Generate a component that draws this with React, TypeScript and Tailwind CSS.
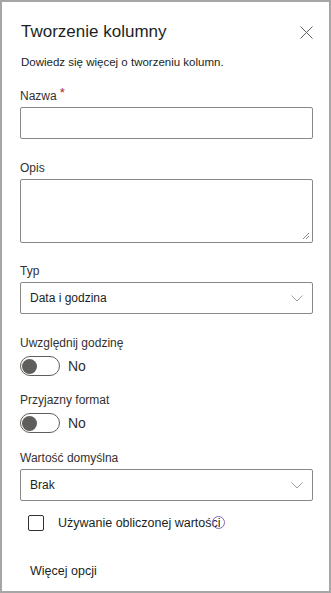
import { ReactNode } from "react";

const font = { fontFamily: '"Liberation Sans", Arial, sans-serif' };

function Label({ children, required }: { children: ReactNode; required?: boolean }) {
  return (
    <div className="h-5 leading-5 text-[12px] text-[#323130] mb-[1px]">
      {children}
      {required && <span className="text-[#a4262c] text-[13px] ml-[3px] relative -top-[3px]">*</span>}
    </div>
  );
}

function Chevron() {
  return (
    <svg width="12" height="7" viewBox="0 0 12 7" className="shrink-0">
      <path d="M0.5 0.5 L6 6 L11.5 0.5" fill="none" stroke="#a19f9d" strokeWidth="1" />
    </svg>
  );
}

function Select({ value }: { value: string }) {
  return (
    <div className="h-8 border border-[#8a8886] rounded-[2px] flex items-center justify-between pl-[9px] pr-[9px]">
      <span className="text-[12px] leading-5 text-[#201f1e]">{value}</span>
      <Chevron />
    </div>
  );
}

function Toggle() {
  return (
    <div className="flex items-center gap-2 mt-[3px] h-5">
      <div className="w-10 h-5 border border-[#605e5c] rounded-full flex items-center pl-[1px]">
        <div className="w-[15px] h-[15px] rounded-full bg-[#605e5c]" />
      </div>
      <span className="text-[14px] leading-5 text-[#323130]">No</span>
    </div>
  );
}

export default function App() {
  return (
    <div
      className="w-[331px] h-[593px] border-2 border-[#a6a6a6] bg-white flex flex-col pl-[18px] pr-[16px] pt-4"
      style={font}
    >
      {/* Header */}
      <div className="flex items-center justify-between h-7">
        <h1 className="text-[17px] text-[#201f1e] leading-7 pl-[1px]">Tworzenie kolumny</h1>
        <svg width="13" height="13" viewBox="0 0 13 13">
          <path d="M0.5 0.5 L12.5 12.5 M12.5 0.5 L0.5 12.5" stroke="#605e5c" strokeWidth="1" fill="none" />
        </svg>
      </div>
      <p className="mt-[7px] h-[18px] leading-[18px] text-[11.5px] text-[#201f1e] pl-[1px]">
        Dowiedz się więcej o tworzeniu kolumn.
      </p>

      <div className="mt-[15px]">
        <Label required>Nazwa</Label>
        <div className="h-8 border border-[#8a8886] rounded-[2px]" />
      </div>

      <div className="mt-[19px]">
        <Label>Opis</Label>
        <div className="h-16 border border-[#8a8886] rounded-[2px] relative">
          <svg width="8" height="8" viewBox="0 0 8 8" className="absolute right-[2px] bottom-[2px]">
            <path d="M7 1 L1 7 M7 4 L4 7" stroke="#8a8886" strokeWidth="1" />
          </svg>
        </div>
      </div>

      <div className="mt-[18px]">
        <Label>Typ</Label>
        <Select value="Data i godzina" />
      </div>

      <div className="mt-[19px]">
        <Label>Uwzględnij godzinę</Label>
        <Toggle />
      </div>

      <div className="mt-[14px]">
        <Label>Przyjazny format</Label>
        <Toggle />
      </div>

      <div className="mt-[15px]">
        <Label>Wartość domyślna</Label>
        <Select value="Brak" />
      </div>

      <div className="mt-[14px] flex items-center h-4 pl-[8px]">
        <div className="w-4 h-4 border border-[#323130] rounded-[2px]" />
        <span className="ml-[14px] text-[12.5px] leading-4 text-[#201f1e] relative">
          Używanie obliczonej wartości
          <span className="absolute right-[-4px] top-[1px] w-[13px] h-[13px] rounded-full border border-[#8764b8]" />
        </span>
      </div>

      <div className="mt-[30px] h-5 leading-5 pl-[10px] text-[12.5px] text-[#201f1e]">Więcej opcji</div>
    </div>
  );
}
